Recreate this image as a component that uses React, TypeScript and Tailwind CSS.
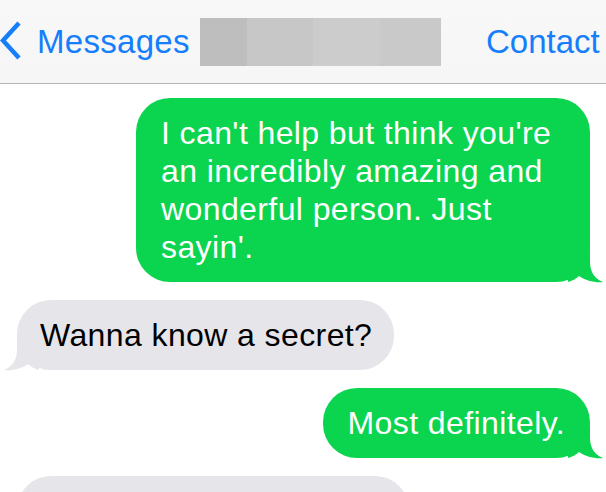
const FONT = { fontFamily: '"Liberation Sans", Arial, sans-serif' };

function Tail({ side, color }: { side: "left" | "right"; color: string }) {
  const pos = side === "right" ? "-right-[12px]" : "-left-[12px] -scale-x-100";
  return (
    <svg
      className={`absolute bottom-0 ${pos}`}
      width="34"
      height="32"
      viewBox="0 0 34 32"
      style={{ overflow: "visible" }}
    >
      <path
        d="M0 0 H22 V12 C22 22 27 29 35 32 C28 33 18 31 11 26 C8 29 4 31 0 32 Z"
        fill={color}
      />
    </svg>
  );
}

function Bubble({
  side,
  children,
  className = "",
}: {
  side: "left" | "right";
  children?: React.ReactNode;
  className?: string;
}) {
  const mine = side === "right";
  const color = mine ? "#0bd44f" : "#e5e5ea";
  return (
    <div className={`flex ${mine ? "justify-end" : "justify-start"}`}>
      <div
        className={`relative rounded-[34px] py-4 text-[32px] leading-[38px] tracking-[0.4px] ${
          mine ? "bg-[#0bd44f] text-white" : "bg-[#e5e5ea] text-black"
        } ${className}`}
      >
        <Tail side={side} color={color} />
        <div className="relative whitespace-nowrap">{children}</div>
      </div>
    </div>
  );
}

export default function App() {
  return (
    <div className="h-[492px] w-[606px] overflow-hidden bg-white" style={FONT}>
      <header className="flex h-[84px] items-center overflow-hidden border-b border-[#b4b4b4] bg-gradient-to-b from-[#f8f8f8] to-[#f5f6f5] text-[33px] text-[#157efb]">
        <svg width="22" height="40" viewBox="0 0 22 40" className="mt-[-2px] shrink-0">
          <polyline
            points="19,2 3,19.5 19,37"
            fill="none"
            stroke="#157efb"
            strokeWidth="4.5"
          />
        </svg>
        <span className="ml-[15px] w-[163px] shrink-0 tracking-[0.3px]">Messages</span>
        <div className="flex h-[48px] w-[241px] shrink-0">
          <div className="w-[47px] bg-[#bdbebd]" />
          <div className="w-[66px] bg-[#c6c7c6]" />
          <div className="w-[67px] bg-[#cbcccb]" />
          <div className="w-[61px] bg-[#c8c9c8]" />
        </div>
        <span className="ml-[45px] whitespace-nowrap">Contact</span>
      </header>

      <main className="flex flex-col gap-[18px] pl-[17px] pr-4 pt-[14px]">
        <Bubble side="right" className="w-[454px] pl-[25px]">
          I can't help but think you're
          <br />
          an incredibly amazing and
          <br />
          wonderful person. Just
          <br />
          sayin'.
        </Bubble>
        <Bubble side="left" className="pl-[23px] pr-[22px]">
          Wanna know a secret?
        </Bubble>
        <Bubble side="right" className="px-[25px]">
          Most definitely.
        </Bubble>
        <Bubble side="left" className="h-[70px] w-[392px]" />
      </main>
    </div>
  );
}
